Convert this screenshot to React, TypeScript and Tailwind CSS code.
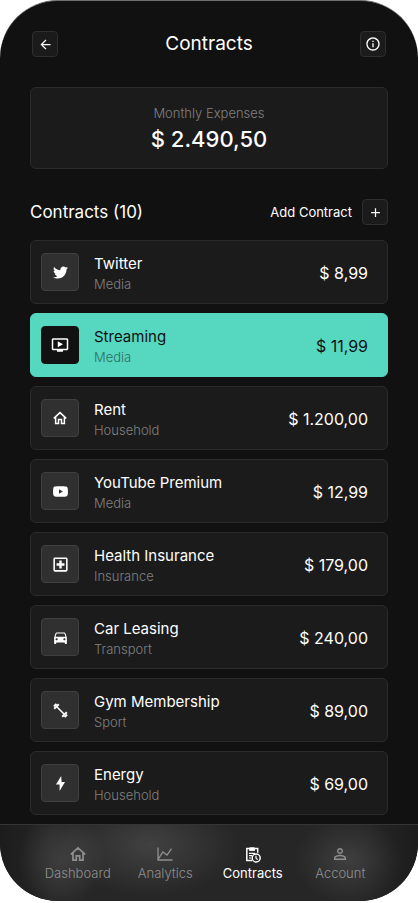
import type { ReactNode } from 'react';
import { AiFillYoutube } from 'react-icons/ai';
import { FaTwitter } from 'react-icons/fa';
import {
  MdAdd,
  MdArrowBack,
  MdDirectionsCar,
  MdInfoOutline,
  MdOutlineLocalHospital,
  MdOutlineOndemandVideo,
  MdPersonOutline,
} from 'react-icons/md';

type Contract = {
  name: string;
  category: string;
  amount: string;
  icon: ReactNode;
  active?: boolean;
};

function HomeIcon({ size }: { size: number }) {
  return (
    <svg width={size} height={size} viewBox="0 0 15 15" fill="none" stroke="currentColor" strokeWidth="1.6">
      <path d="M0.8 7.9 7.5 1.7l6.7 6.2M2.8 6.5v6.8h3.1V9.2h3.2v4.1h3.1V6.5" />
    </svg>
  );
}

function BoltIcon() {
  return (
    <svg width="9" height="15" viewBox="0 0 9 15" fill="currentColor">
      <path d="M5.2 0 0 8.6h3.6V15L9 6H5.6Z" />
    </svg>
  );
}

function DumbbellIcon() {
  return (
    <svg width="15" height="15" viewBox="0 0 15 15" fill="none" stroke="currentColor">
      <path d="M3.5 3.5l8 8" strokeWidth="1.6" />
      <path d="M1.2 5.8l4.6-4.6M9.2 13.8l4.6-4.6" strokeWidth="2" />
      <path d="M0.9 3.4l2.5-2.5M11.6 14.1l2.5-2.5" strokeWidth="2" />
    </svg>
  );
}

function ChartIcon() {
  return (
    <svg width="16" height="14" viewBox="0 0 16 14" fill="none" stroke="currentColor" strokeWidth="1.3">
      <path d="M1 0.5V13h14.5M1.6 11.6 5.8 5l4.2 3 4.5-6.4" />
    </svg>
  );
}

function ClipboardClockIcon() {
  return (
    <svg width="16" height="17" viewBox="0 0 16 17" fill="none" stroke="currentColor" strokeWidth="1.5">
      <path d="M7 14.6H1.8V2.6h2.4M10 2.6h2.7v4.2" />
      <path d="M4.6 1.8h5v2.6h-5z" fill="currentColor" strokeWidth="1" />
      <path d="M4 7.4h6M4 9.7h3M4 12h2" strokeWidth="1.2" />
      <circle cx="11.2" cy="12" r="4" />
      <path d="M11 9.7v2.5l1.7 1.4" strokeWidth="1.2" />
    </svg>
  );
}

const contracts: Contract[] = [
  { name: 'Twitter', category: 'Media', amount: '8,99', icon: <FaTwitter size={15} /> },
  { name: 'Streaming', category: 'Media', amount: '11,99', icon: <MdOutlineOndemandVideo size={18} />, active: true },
  { name: 'Rent', category: 'Household', amount: '1.200,00', icon: <HomeIcon size={14} /> },
  { name: 'YouTube Premium', category: 'Media', amount: '12,99', icon: <AiFillYoutube size={17} /> },
  { name: 'Health Insurance', category: 'Insurance', amount: '179,00', icon: <MdOutlineLocalHospital size={19} /> },
  { name: 'Car Leasing', category: 'Transport', amount: '240,00', icon: <MdDirectionsCar size={17} /> },
  { name: 'Gym Membership', category: 'Sport', amount: '89,00', icon: <DumbbellIcon /> },
  { name: 'Energy', category: 'Household', amount: '69,00', icon: <BoltIcon /> },
];

const tabs: { label: string; icon: ReactNode; current?: boolean }[] = [
  { label: 'Dashboard', icon: <HomeIcon size={16} /> },
  { label: 'Analytics', icon: <ChartIcon /> },
  { label: 'Contracts', icon: <ClipboardClockIcon />, current: true },
  { label: 'Account', icon: <MdPersonOutline size={18} /> },
];

function IconButton({ label, children }: { label: string; children: ReactNode }) {
  return (
    <button
      type="button"
      aria-label={label}
      className="flex size-[26px] shrink-0 items-center justify-center rounded border border-[#2e2e2e] bg-[#1b1b1b] text-white"
    >
      {children}
    </button>
  );
}

function ContractRow({ contract }: { contract: Contract }) {
  const { name, category, amount, icon, active } = contract;
  return (
    <li
      className={`flex h-16 items-center rounded-md border pr-[19px] pl-[10px] ${
        active ? 'border-[#56d7c0] bg-[#56d7c0] text-[#111111]' : 'border-[#2b2b2b] bg-[#1b1b1b] text-white'
      }`}
    >
      <span
        className={`flex size-[38px] shrink-0 items-center justify-center rounded border text-white ${
          active ? 'border-[#111111] bg-[#111111]' : 'border-[#404040] bg-[#303030]'
        }`}
      >
        {icon}
      </span>
      <div className="ml-[15px] flex-1 pt-[3px]">
        <p className="text-[15px] leading-5">{name}</p>
        <p className={`text-[13px] leading-5 font-light ${active ? 'text-[#2f6f64]' : 'text-[#808080]'}`}>
          {category}
        </p>
      </div>
      <p className="pt-[2px] text-base leading-5">$ {amount}</p>
    </li>
  );
}

export default function App() {
  return (
    <div className="bg-white pb-px font-['Inter','Liberation_Sans',sans-serif]">
      <div className="overflow-hidden rounded-[58px] border-t border-[#707070] bg-[#111111] text-white">
        <header className="flex items-center justify-between px-8 pt-[30px]">
          <IconButton label="Back">
            <MdArrowBack size={15} />
          </IconButton>
          <h1 className="text-[19px] leading-[26px]">Contracts</h1>
          <IconButton label="Information">
            <MdInfoOutline size={16} />
          </IconButton>
        </header>

        <main className="px-[30px] pt-[30px] pb-[9px]">
          <section className="rounded-md border border-[#2b2b2b] bg-[#1b1b1b] pt-[15px] pb-[13px] text-center">
            <h2 className="text-[13px] leading-5 font-light text-[#808080]">Monthly Expenses</h2>
            <p className="text-[22px] leading-8 font-medium">$ 2.490,50</p>
          </section>

          <div className="mt-[30px] flex items-center justify-between">
            <h2 className="text-[17px] leading-[26px]">Contracts (10)</h2>
            <div className="flex items-center gap-[10px]">
              <span className="text-[13px] leading-[26px]">Add Contract</span>
              <IconButton label="Add Contract">
                <MdAdd size={15} />
              </IconButton>
            </div>
          </div>

          <ul className="mt-[15px] flex flex-col gap-[9px]">
            {contracts.map((contract) => (
              <ContractRow key={contract.name} contract={contract} />
            ))}
          </ul>
        </main>

        <nav className="border-t border-[#353535] bg-[radial-gradient(ellipse_44px_48px_at_62px_34px,#ffffff1c,#ffffff10_50%,transparent),radial-gradient(ellipse_90px_52px_at_150px_20px,#ffffff20,#ffffff10_50%,transparent),radial-gradient(ellipse_54px_44px_at_348px_35px,#ffffff1e,#ffffff0e_50%,transparent),linear-gradient(to_right,#1c1c1c,#262626_12%,#262626_88%,#1c1c1c)] px-[34px] pt-5 pb-[18px]">
          <ul className="grid grid-cols-4">
            {tabs.map(({ label, icon, current }) => (
              <li key={label}>
                <a
                  href="#"
                  aria-current={current ? 'page' : undefined}
                  className={`flex flex-col items-center text-[13px] leading-5 ${
                    current ? 'font-normal text-white' : 'font-light text-[#8f8f8f]'
                  }`}
                >
                  <span className="flex h-[18px] items-center">{icon}</span>
                  {label}
                </a>
              </li>
            ))}
          </ul>
        </nav>
      </div>
    </div>
  );
}
